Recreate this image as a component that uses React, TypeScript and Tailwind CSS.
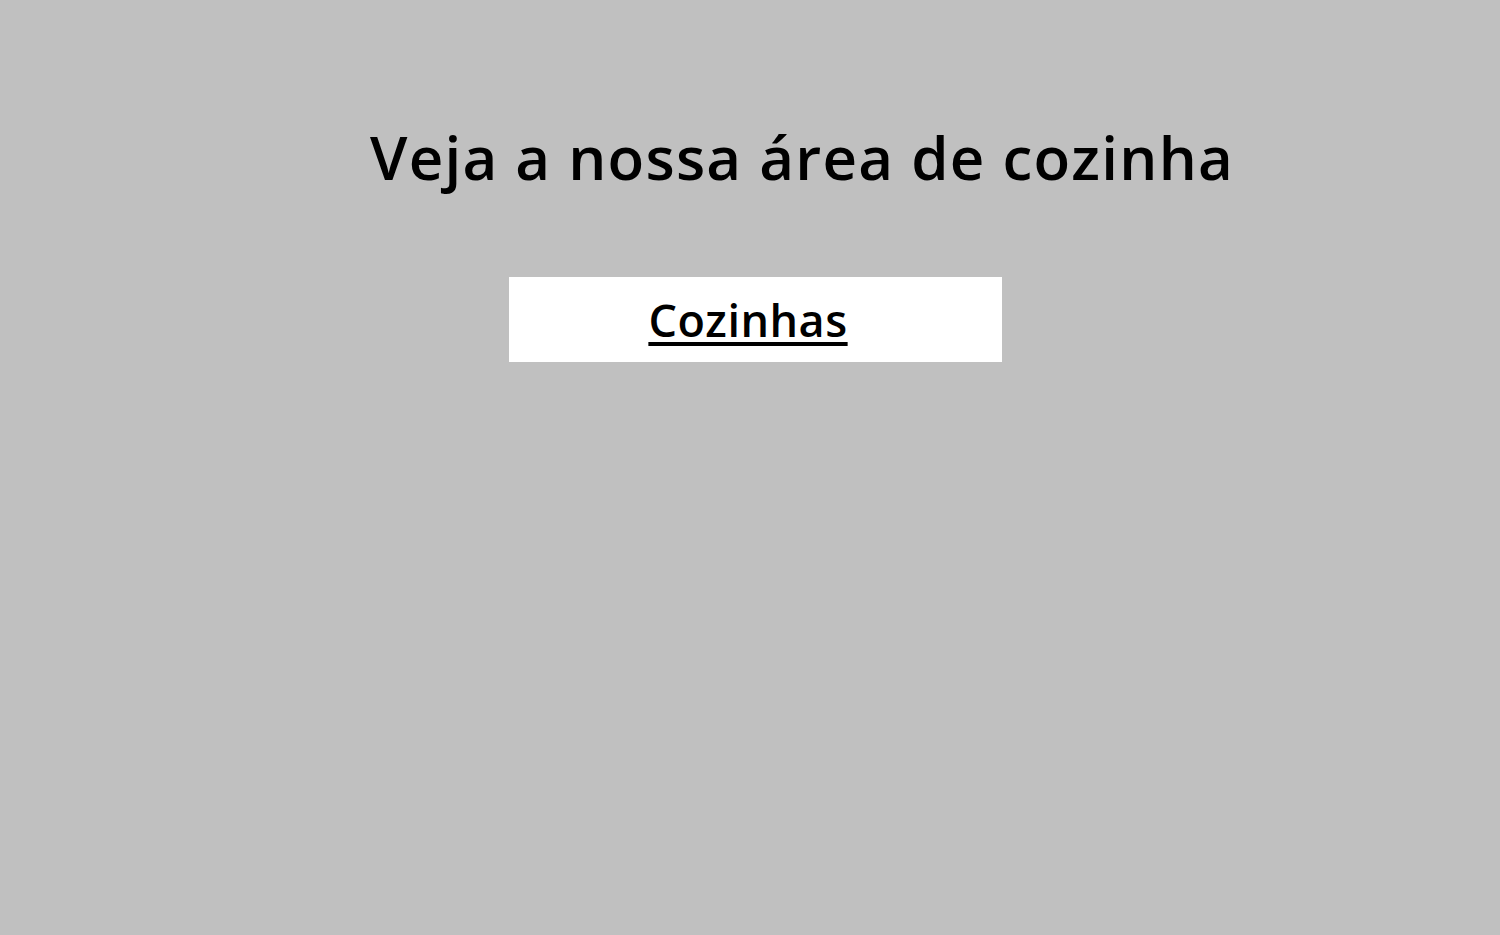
export default function App() {
  return (
    <div className="min-h-[935px] w-full bg-[#c0c0c0] font-['Open_Sans',sans-serif] text-black">
      <div className="pt-[112px] pl-[370px]">
        <h1 className="text-[60px] font-semibold leading-[90px] tracking-[1.25px] whitespace-nowrap">Veja a nossa área de cozinha</h1>
      </div>
      <div className="mt-[75px] ml-[509px] flex h-[85px] w-[493px] items-center justify-center bg-white">
        <a href="#" className="pr-[15px] text-[45px] font-semibold leading-none tracking-[0.5px] underline decoration-[4px] underline-offset-[5px]">Cozinhas</a>
      </div>
    </div>
  );
}
